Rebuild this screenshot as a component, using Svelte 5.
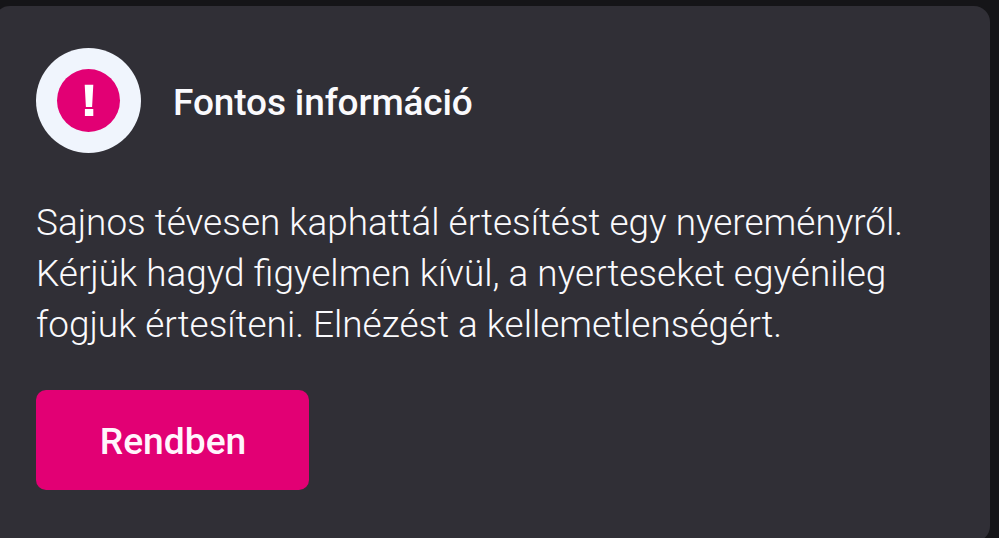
<script lang="ts">
    const title = 'Fontos információ';
    const lines = [
        'Sajnos tévesen kaphattál értesítést egy nyereményről.',
        'Kérjük hagyd figyelmen kívül, a nyerteseket egyénileg',
        'fogjuk értesíteni. Elnézést a kellemetlenségért.'
    ];
    const confirmLabel = 'Rendben';
</script>

<div class="screen">
    <div class="card">
        <div class="card-header">
            <svg class="icon" width="105" height="105" viewBox="0 0 105 105" aria-hidden="true">
                <circle cx="52.5" cy="52.5" r="52.5" fill="#f0f5fd" />
                <circle cx="52.5" cy="52.5" r="31.5" fill="#e20074" />
                <path d="M48.7 36.8h8.6l-1.2 22.2h-6.2zM48.9 61h8.4v7h-8.4z" fill="#fff" />
            </svg>
            <h1>{title}</h1>
        </div>
        <p class="message">
            {#each lines as line}
                <span>{line}</span>
            {/each}
        </p>
        <button type="button">{confirmLabel}</button>
    </div>
</div>

<style>
 :global(body) {
    margin: 0;
    background: #151518;
 }

 .screen {
    height: 538px;
    box-sizing: border-box;
    padding: 6px 9px 0 0;
    background: #151518;
    overflow: hidden;
    font-family: Roboto, sans-serif;
    color: #fafafd;
 }

 .card {
    height: 536px;
    box-sizing: border-box;
    margin-left: -6px;
    padding: 42px 36px 0 42px;
    background: #302f36;
    border-radius: 16px;
 }

 .card-header {
    display: flex;
    align-items: center;
    gap: 32px;
 }

 .icon {
    display: block;
 }

 h1 {
    margin: 0;
    padding-top: 4px;
    font-size: 37px;
    line-height: 44px;
    font-weight: 500;
    letter-spacing: -0.12px;
    font-variant-ligatures: common-ligatures;
 }

 .message {
    margin: 44px 0 40px;
    font-size: 36.93px;
    line-height: 51px;
    font-weight: 300;
 }

 .message span {
    display: block;
    white-space: nowrap;
 }

 button {
    display: block;
    width: 273px;
    height: 100px;
    padding: 2px 0 0 1px;
    border: 0;
    border-radius: 10px;
    background: #e20074;
    color: #fff5fc;
    font: 500 37.2px Roboto, sans-serif;
    cursor: pointer;
 }
</style>
